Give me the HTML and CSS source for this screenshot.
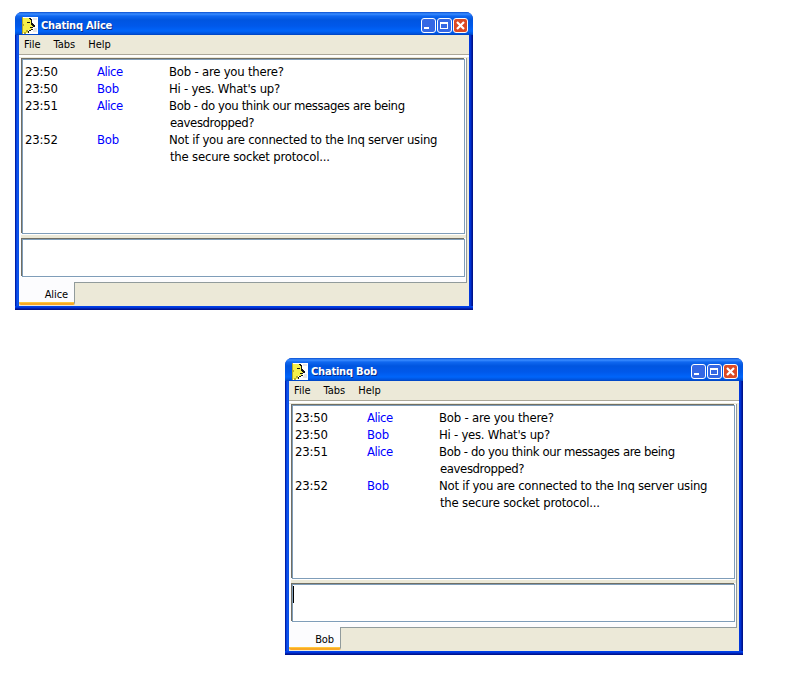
FILE: index.html
```
<!DOCTYPE html>
<html lang="en">
<head>
<meta charset="utf-8">
<title>Chatinq</title>
<link rel="stylesheet" href="styles.css">
</head>
<body>
<section class="window alice">
  <header class="titlebar">
    <svg class="face" width="16" height="17" viewBox="0 0 16 17" shape-rendering="crispEdges"><path fill="#fff" d="M0 0h16v17H0z"/><path fill="#f6f04a" d="M1 1h7l1 3v2l3 3-2 1v2l-1 1H6v3H1z"/><path fill="#b5aa2c" d="M0 0h1v17H0zm1 7h1v2H1zm3 6h2v2H4zm-2 2h2v2H2z"/><path fill="#e6e6e6" d="M11 1h4v2h-4zm1 10h3v4h-4z"/><path fill="#151515" d="M7 1h2v1h1v2H9V3H8V2H7zM5 5h3v1H5zm4-1h1v2h1v1h1v1h1v2h-2V9h-1V8H9zM8 10h3v1H8zm1 2h2v1H9v1H7v-1h2zm-3 2h1v2H6z"/></svg>
    <h1>Chatinq Alice</h1>
    <div class="controls">
      <svg width="15" height="15" viewBox="0 0 15 15"><rect x=".5" y=".5" width="14" height="14" rx="2.5" fill="#3568e4" stroke="#fff"/><path d="M3 9h5v2H3z" fill="#fff"/></svg>
      <svg width="15" height="15" viewBox="0 0 15 15"><rect x=".5" y=".5" width="14" height="14" rx="2.5" fill="#3568e4" stroke="#fff"/><path d="M3 4h8v7H3zm1 2v4h6V6z" fill="#fff" fill-rule="evenodd"/></svg>
      <svg width="15" height="15" viewBox="0 0 15 15"><rect x=".5" y=".5" width="14" height="14" rx="2.5" fill="#dc4a24" stroke="#fff"/><path d="m4 4 7 7m0-7-7 7" stroke="#fff" stroke-width="2.2"/></svg>
    </div>
  </header>
  <nav class="menu"><span>File</span><span>Tabs</span><span>Help</span></nav>
  <main class="content">
    <div class="panes">
      <div class="messages">
        <time>23:50</time><b class="a">Alice</b><p><span class="l1">Bob - are you there?</span></p>
        <time>23:50</time><b>Bob</b><p><span class="l2">Hi - yes. What's up?</span></p>
        <time>23:51</time><b class="a">Alice</b><p><span class="l3">Bob - do you think our messages are being</span><br><span class="l4">eavesdropped?</span></p>
        <time>23:52</time><b>Bob</b><p><span class="l5">Not if you are connected to the Inq server using</span><br><span class="l6">the secure socket protocol...</span></p>
      </div>
      <div class="divider"></div>
      <div class="entry"></div>
    </div>
    <footer class="tabs"><div class="tab">Alice</div><div class="rest"></div></footer>
  </main>
</section>
<section class="window bob">
  <header class="titlebar">
    <svg class="face" width="16" height="17" viewBox="0 0 16 17" shape-rendering="crispEdges"><path fill="#fff" d="M0 0h16v17H0z"/><path fill="#f6f04a" d="M1 1h7l1 3v2l3 3-2 1v2l-1 1H6v3H1z"/><path fill="#b5aa2c" d="M0 0h1v17H0zm1 7h1v2H1zm3 6h2v2H4zm-2 2h2v2H2z"/><path fill="#e6e6e6" d="M11 1h4v2h-4zm1 10h3v4h-4z"/><path fill="#151515" d="M7 1h2v1h1v2H9V3H8V2H7zM5 5h3v1H5zm4-1h1v2h1v1h1v1h1v2h-2V9h-1V8H9zM8 10h3v1H8zm1 2h2v1H9v1H7v-1h2zm-3 2h1v2H6z"/></svg>
    <h1>Chatinq Bob</h1>
    <div class="controls">
      <svg width="15" height="15" viewBox="0 0 15 15"><rect x=".5" y=".5" width="14" height="14" rx="2.5" fill="#3568e4" stroke="#fff"/><path d="M3 9h5v2H3z" fill="#fff"/></svg>
      <svg width="15" height="15" viewBox="0 0 15 15"><rect x=".5" y=".5" width="14" height="14" rx="2.5" fill="#3568e4" stroke="#fff"/><path d="M3 4h8v7H3zm1 2v4h6V6z" fill="#fff" fill-rule="evenodd"/></svg>
      <svg width="15" height="15" viewBox="0 0 15 15"><rect x=".5" y=".5" width="14" height="14" rx="2.5" fill="#dc4a24" stroke="#fff"/><path d="m4 4 7 7m0-7-7 7" stroke="#fff" stroke-width="2.2"/></svg>
    </div>
  </header>
  <nav class="menu"><span>File</span><span>Tabs</span><span>Help</span></nav>
  <main class="content">
    <div class="panes">
      <div class="messages">
        <time>23:50</time><b class="a">Alice</b><p><span class="l1">Bob - are you there?</span></p>
        <time>23:50</time><b>Bob</b><p><span class="l2">Hi - yes. What's up?</span></p>
        <time>23:51</time><b class="a">Alice</b><p><span class="l3">Bob - do you think our messages are being</span><br><span class="l4">eavesdropped?</span></p>
        <time>23:52</time><b>Bob</b><p><span class="l5">Not if you are connected to the Inq server using</span><br><span class="l6">the secure socket protocol...</span></p>
      </div>
      <div class="divider"></div>
      <div class="entry"><i class="caret"></i></div>
    </div>
    <footer class="tabs"><div class="tab">Bob</div><div class="rest"></div></footer>
  </main>
</section>
</body>
</html>
```
FILE: styles.css
```
* { box-sizing: border-box; }
body { margin: 0; width: 800px; height: 700px; overflow: hidden; background: #fff; color: #000; font-family: "DejaVu Sans Condensed", "DejaVu Sans", sans-serif; font-stretch: condensed; }
.window { position: absolute; width: 458px; display: flex; flex-direction: column; padding: 0 4px 4px; border-radius: 7px 7px 0 0; background: linear-gradient(90deg, #001fa8 0, #001fa8 1px, #0036dc 1px, #1660f0 3px, #0040dc 4px, #0040dc 454px, #0038e0 454px, #0030d0 456px, #00138c 457px); overflow: hidden; }
.window::after { content: ""; position: absolute; left: 0; right: 0; bottom: 0; height: 4px; background: linear-gradient(#0040e8 0 1px, #0036d8 1px 2px, #0020b0 2px 3px, #00138c 3px); }
.alice { left: 15px; top: 12px; height: 298px; }
.bob { left: 285px; top: 358px; height: 297px; }
.titlebar { flex: none; height: 23px; margin: 0 -4px; padding: 3px 5px 0 6px; display: flex; align-items: center; background: linear-gradient(#0a4fd0 0, #3a8cff 2px, #1068f0 4px, #0055e0 8px, #0058ea 14px, #0065fa 19px, #0050d8 22px, #0040b8 23px); color: #fff; }
.face { flex: none; margin: 1px 0 0 1px; }
.titlebar h1 { margin: 0 0 0 3px; font-size: 11px; line-height: 15px; font-weight: bold; letter-spacing: -.2px; text-shadow: 1px 1px #082a86; white-space: nowrap; }
.controls { margin-left: auto; display: flex; gap: 1px; }
.menu { flex: none; height: 20px; padding: 2px 0 0 5px; display: flex; gap: 13px; font-size: 11px; line-height: 15px; background: #ece9d8; border-bottom: 1px solid #aca899; }
.content { flex: 1; display: flex; flex-direction: column; min-height: 0; background: #ece9d8; border-top: 2px solid #fff; }
.panes { flex: 1; min-height: 0; display: flex; flex-direction: column; margin: 1px 2px 0 0; padding-left: 2px; background: #fcfcfe; border-right: 1px solid #919b9c; }
.messages, .entry { flex: none; background: #fff; border: 1px solid #7f9db9; margin: 1px 1px 1px 1px; box-shadow: -1px -1px #716f64, 1px 1px #fff; }
.messages { height: 175px; display: grid; grid-template-columns: 72px 72px 1fr; align-content: start; padding: 3px 0 0 2px; font-size: 13px; line-height: 17px; }
.bob .messages { height: 174px; }
.divider { flex: none; height: 3px; background: #ece9d8; }
.messages time { letter-spacing: -.2px; }
.messages b { color: #00f; font-weight: normal; letter-spacing: -.2px; }
.messages .a { letter-spacing: -.5px; }
.messages p { margin: 0; white-space: nowrap; }
.l1 { letter-spacing: -.22px; }
.l2 { letter-spacing: -.26px; }
.l3 { letter-spacing: -.39px; }
.l4 { letter-spacing: -.4px; }
.l5 { letter-spacing: -.26px; }
.l6 { letter-spacing: -.21px; }
.l4, .l6 { margin-left: 1px; }
.entry { height: 38px; }
.caret { display: block; width: 1px; height: 17px; margin: 1px 0; background: #000; }
.tabs { flex: none; display: flex; height: 24px; }
.tab { width: 56px; height: 23px; padding: 5px 6px 0 0; text-align: right; font-size: 11px; line-height: 15px; letter-spacing: -.1px; background: #fcfcfe; border-right: 1px solid #919b9c; border-bottom: 2px solid #f9a825; border-radius: 0 0 2px 2px; box-shadow: inset 0 -1px #ffc73c; }
.bob .tab { width: 52px; }
.rest { flex: 1; margin-right: 2px; border-top: 1px solid #919b9c; }
```
